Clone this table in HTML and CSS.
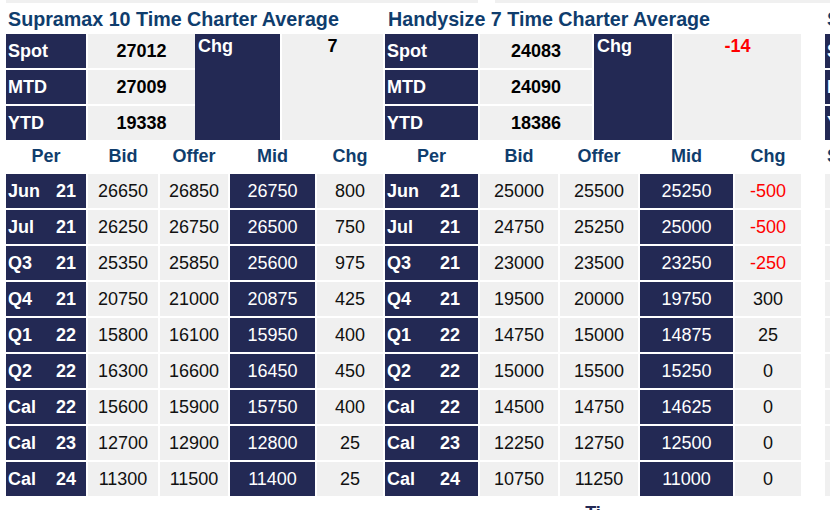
FILE: index.html
```html
<!DOCTYPE html>
<html>
<head>
<meta charset="utf-8">
<title>Time Charter Averages</title>
<link rel="stylesheet" href="styles.css">
</head>
<body>
<div class="topstrip"><span class="s1"></span><span class="s2"></span></div>
<div class="panels">
  <section class="panel p1">
    <h2 class="title">Supramax 10 Time Charter Average</h2>
    <div class="summary">
      <div class="sumgrid">
        <div class="lab">Spot</div><div class="val">27012</div>
        <div class="lab">MTD</div><div class="val">27009</div>
        <div class="lab">YTD</div><div class="val">19338</div>
      </div>
      <div class="chglab">Chg</div>
      <div class="chgval">7</div>
    </div>
    <div class="data">
      <div class="hd">Per</div><div class="hd">Bid</div><div class="hd">Offer</div><div class="hd">Mid</div><div class="hd">Chg</div>
      <div class="per"><span class="m">Jun</span><span>21</span></div><div class="cell">26650</div><div class="cell">26850</div><div class="mid">26750</div><div class="cell">800</div>
      <div class="per"><span class="m">Jul</span><span>21</span></div><div class="cell">26250</div><div class="cell">26750</div><div class="mid">26500</div><div class="cell">750</div>
      <div class="per"><span class="m">Q3</span><span>21</span></div><div class="cell">25350</div><div class="cell">25850</div><div class="mid">25600</div><div class="cell">975</div>
      <div class="per"><span class="m">Q4</span><span>21</span></div><div class="cell">20750</div><div class="cell">21000</div><div class="mid">20875</div><div class="cell">425</div>
      <div class="per"><span class="m">Q1</span><span>22</span></div><div class="cell">15800</div><div class="cell">16100</div><div class="mid">15950</div><div class="cell">400</div>
      <div class="per"><span class="m">Q2</span><span>22</span></div><div class="cell">16300</div><div class="cell">16600</div><div class="mid">16450</div><div class="cell">450</div>
      <div class="per"><span class="m">Cal</span><span>22</span></div><div class="cell">15600</div><div class="cell">15900</div><div class="mid">15750</div><div class="cell">400</div>
      <div class="per"><span class="m">Cal</span><span>23</span></div><div class="cell">12700</div><div class="cell">12900</div><div class="mid">12800</div><div class="cell">25</div>
      <div class="per"><span class="m">Cal</span><span>24</span></div><div class="cell">11300</div><div class="cell">11500</div><div class="mid">11400</div><div class="cell">25</div>
    </div>
  </section>

  <section class="panel p2">
    <h2 class="title">Handysize 7 Time Charter Average</h2>
    <div class="summary">
      <div class="sumgrid">
        <div class="lab">Spot</div><div class="val">24083</div>
        <div class="lab">MTD</div><div class="val">24090</div>
        <div class="lab">YTD</div><div class="val">18386</div>
      </div>
      <div class="chglab">Chg</div>
      <div class="chgval neg">-14</div>
    </div>
    <div class="data">
      <div class="hd">Per</div><div class="hd">Bid</div><div class="hd">Offer</div><div class="hd">Mid</div><div class="hd">Chg</div>
      <div class="per"><span class="m">Jun</span><span>21</span></div><div class="cell">25000</div><div class="cell">25500</div><div class="mid">25250</div><div class="cell neg">-500</div>
      <div class="per"><span class="m">Jul</span><span>21</span></div><div class="cell">24750</div><div class="cell">25250</div><div class="mid">25000</div><div class="cell neg">-500</div>
      <div class="per"><span class="m">Q3</span><span>21</span></div><div class="cell">23000</div><div class="cell">23500</div><div class="mid">23250</div><div class="cell neg">-250</div>
      <div class="per"><span class="m">Q4</span><span>21</span></div><div class="cell">19500</div><div class="cell">20000</div><div class="mid">19750</div><div class="cell">300</div>
      <div class="per"><span class="m">Q1</span><span>22</span></div><div class="cell">14750</div><div class="cell">15000</div><div class="mid">14875</div><div class="cell">25</div>
      <div class="per"><span class="m">Q2</span><span>22</span></div><div class="cell">15000</div><div class="cell">15500</div><div class="mid">15250</div><div class="cell">0</div>
      <div class="per"><span class="m">Cal</span><span>22</span></div><div class="cell">14500</div><div class="cell">14750</div><div class="mid">14625</div><div class="cell">0</div>
      <div class="per"><span class="m">Cal</span><span>23</span></div><div class="cell">12250</div><div class="cell">12750</div><div class="mid">12500</div><div class="cell">0</div>
      <div class="per"><span class="m">Cal</span><span>24</span></div><div class="cell">10750</div><div class="cell">11250</div><div class="mid">11000</div><div class="cell">0</div>
    </div>
    <div class="foot">Ti</div>
  </section>

  <section class="panel p3">
    <h2 class="title">Supramax Average</h2>
    <div class="summary">
      <div class="sumgrid">
        <div class="lab">Spot</div><div class="val"></div>
        <div class="lab">MTD</div><div class="val"></div>
        <div class="lab">YTD</div><div class="val"></div>
      </div>
    </div>
    <div class="data">
      <div class="hd hdl">S</div><div class="hd"></div><div class="hd"></div><div class="hd"></div><div class="hd"></div>
      <div class="cell"></div><div class="cell"></div><div class="cell"></div><div class="mid"></div><div class="cell"></div>
      <div class="cell"></div><div class="cell"></div><div class="cell"></div><div class="mid"></div><div class="cell"></div>
      <div class="cell"></div><div class="cell"></div><div class="cell"></div><div class="mid"></div><div class="cell"></div>
      <div class="cell"></div><div class="cell"></div><div class="cell"></div><div class="mid"></div><div class="cell"></div>
      <div class="cell"></div><div class="cell"></div><div class="cell"></div><div class="mid"></div><div class="cell"></div>
      <div class="cell"></div><div class="cell"></div><div class="cell"></div><div class="mid"></div><div class="cell"></div>
      <div class="cell"></div><div class="cell"></div><div class="cell"></div><div class="mid"></div><div class="cell"></div>
      <div class="cell"></div><div class="cell"></div><div class="cell"></div><div class="mid"></div><div class="cell"></div>
      <div class="cell"></div><div class="cell"></div><div class="cell"></div><div class="mid"></div><div class="cell"></div>
    </div>
  </section>
</div>
</body>
</html>
```

FILE: styles.css
```css
html, body {
  margin: 0;
  padding: 0;
}
body {
  width: 830px;
  height: 510px;
  overflow: hidden;
  background: #ffffff;
  font-family: "Liberation Sans", Arial, sans-serif;
  color: #111111;
}

.topstrip {
  display: flex;
  height: 3px;
  padding-left: 6px;
}
.s1 {
  width: 472px;
  background: #f0f0f0;
}
.s2 {
  flex: 1;
  margin-left: 17px;
  background: #f0f0f0;
}

.panels {
  display: flex;
  padding-left: 6px;
}
.panel {
  flex-shrink: 0;
}
.p1 { width: 377px; margin-right: 2px; }
.p2 { width: 416px; margin-right: 24px; }
.p3 { width: 400px; }

.title {
  margin: 0;
  height: 31px;
  box-sizing: border-box;
  padding: 5px 0 0 2px;
  font-size: 19.7px;
  line-height: 22px;
  font-weight: bold;
  color: #0f3d6d;
  white-space: nowrap;
}
.p2 .title { padding-left: 3px; }

.summary {
  display: flex;
  height: 106px;
}
.sumgrid {
  display: grid;
  grid-template-rows: repeat(3, 34px);
  gap: 2px;
}
.p1 .sumgrid { grid-template-columns: 80px 107px; }
.p2 .sumgrid { grid-template-columns: 93px 112px; }
.p3 .sumgrid { grid-template-columns: 93px 112px; }

.lab {
  display: flex;
  align-items: center;
  padding-left: 2px;
  background: #232954;
  color: #ffffff;
  font-size: 18px;
  font-weight: bold;
}
.val {
  display: flex;
  align-items: center;
  justify-content: center;
  background: #f0f0f0;
  color: #000000;
  font-size: 18px;
  font-weight: bold;
}
.chglab {
  box-sizing: border-box;
  padding: 2px 3px;
  background: #232954;
  color: #ffffff;
  font-size: 18px;
  font-weight: bold;
}
.chgval {
  box-sizing: border-box;
  margin-left: 2px;
  padding-top: 2px;
  text-align: center;
  background: #f0f0f0;
  color: #000000;
  font-size: 18px;
  font-weight: bold;
}
.p1 .chglab { width: 85px; }
.p1 .chgval { width: 101px; }
.p2 .chglab { width: 78px; margin-left: 2px; }
.p2 .chgval { width: 127px; }

.data {
  display: grid;
  grid-template-rows: 32px repeat(9, 34px);
  gap: 2px;
}
.p1 .data { grid-template-columns: 80px 70px 68px 85px 66px; }
.p2 .data { grid-template-columns: 93px 78px 78px 93px 66px; }
.p3 .data { grid-template-columns: 93px 78px 78px 93px 66px; }

.hd {
  display: flex;
  align-items: center;
  justify-content: center;
  color: #0f3d6d;
  font-size: 18px;
  font-weight: bold;
}
.hdl { justify-content: flex-start; padding-left: 2px; }

.per {
  display: flex;
  align-items: center;
  padding-left: 2px;
  background: #232954;
  color: #ffffff;
  font-size: 18px;
  font-weight: bold;
}
.p1 .m { width: 48px; }
.p2 .m { width: 53px; }

.cell, .mid {
  display: flex;
  align-items: center;
  justify-content: center;
  font-size: 18px;
}
.cell {
  background: #f0f0f0;
  color: #111111;
}
.mid {
  background: #232954;
  color: #ffffff;
}
.neg {
  color: #ff0000;
}

.foot {
  margin-top: 7px;
  text-align: center;
  color: #232954;
  font-size: 18px;
  font-weight: bold;
  line-height: 21px;
}
```
